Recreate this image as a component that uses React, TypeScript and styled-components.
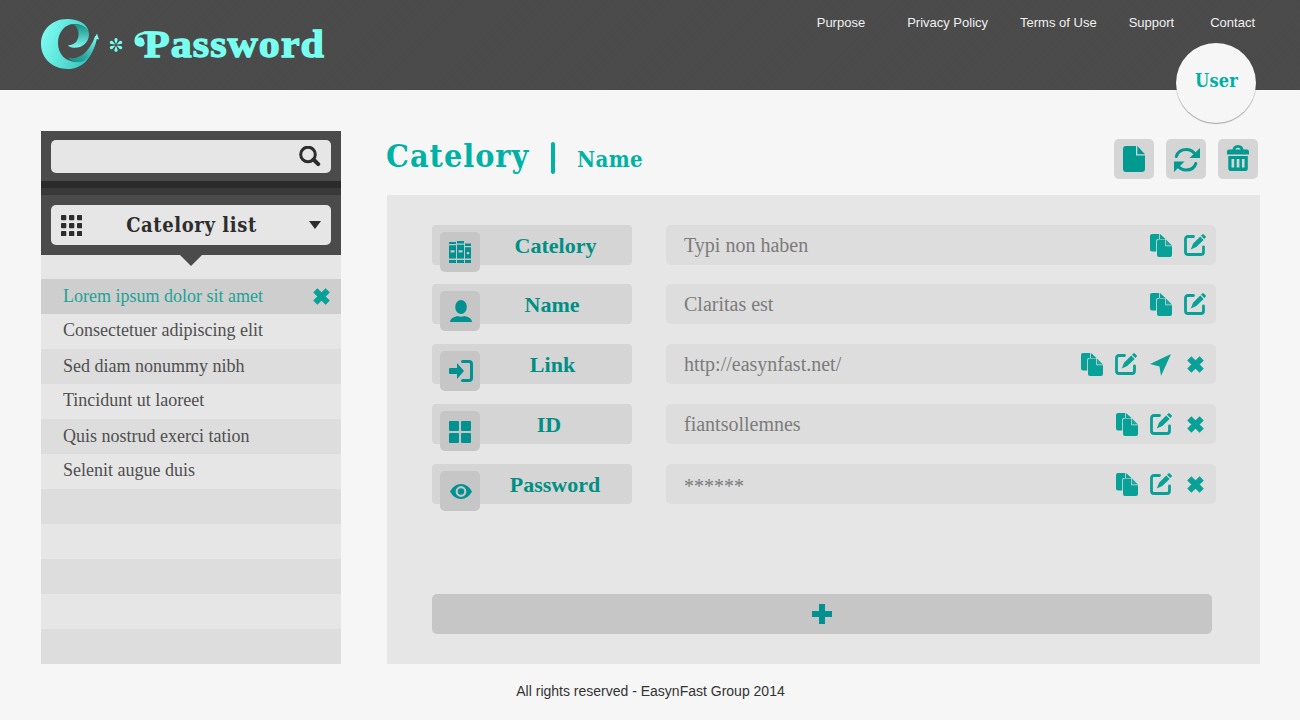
import React from "react";
import styled, { createGlobalStyle } from "styled-components";

const slab = `"DejaVu Serif Condensed", "DejaVu Serif", serif`;
const roman = `"Liberation Serif", "Times New Roman", serif`;
const sans = `"Liberation Sans", Arial, sans-serif`;

const Global = createGlobalStyle`
  * { box-sizing: border-box; }
  body { margin: 0; background: #f6f6f6; }
  svg { display: block; flex: none; }
  button { border: 0; padding: 0; font: inherit; color: inherit; }
`;

const Page = styled.div`
  width: 1300px;
  height: 720px;
  overflow: hidden;
  background: #f6f6f6;
`;

const Header = styled.header`
  height: 90px;
  padding: 15px 45px 0 41px;
  display: flex;
  justify-content: space-between;
  align-items: flex-start;
  background: repeating-linear-gradient(135deg, #4b4b4b 0 3px, #4a4a4a 3px 5px);
`;

const Brand = styled.a`
  display: block;
`;

const Nav = styled.nav`
  display: flex;
  font: 13px/16px ${sans};
  color: #f0f0f0;
`;

const NavLink = styled.a<{ $gap: number }>`
  margin-left: ${(p) => p.$gap}px;
  white-space: nowrap;
`;

const UserBadge = styled.button`
  position: absolute;
  left: 1176px;
  top: 43px;
  width: 80px;
  height: 80px;
  padding: 0 0 4px 1px;
  border-radius: 50%;
  background: #f6f6f6;
  box-shadow: 0 1px 1px rgba(0, 0, 0, 0.35);
  color: #00afa5;
  font: bold 18px/20px ${slab};
  letter-spacing: 0.2px;
`;

const Body = styled.div`
  display: flex;
  padding: 41px 40px 0 41px;
  height: 574px;
`;

const Sidebar = styled.aside`
  width: 300px;
  height: 533px;
  background: #e6e6e6;
`;

const SearchBar = styled.div`
  height: 50px;
  padding: 9px 10px 8px;
  background: #4b4b4b;
`;

const SearchField = styled.div`
  height: 33px;
  border-radius: 5px;
  background: #e6e6e6;
  display: flex;
  justify-content: flex-end;
  padding: 6px 10px 0 0;
`;

const Band = styled.div<{ $tone: string }>`
  height: 7px;
  background: ${(p) => p.$tone};
`;

const Picker = styled.div`
  height: 60px;
  padding: 10px;
  background: #4b4b4b;
`;

const PickerButton = styled.div`
  height: 40px;
  padding: 0 10px;
  border-radius: 5px;
  background: #e6e6e6;
  display: flex;
  align-items: center;
  justify-content: space-between;
  color: #2d2d2d;
  font: bold 20px/40px ${slab};
  letter-spacing: 0.6px;
`;

const PickerText = styled.span`
  margin-right: 8px;
`;

const Notch = styled.div`
  height: 24px;
  display: flex;
  justify-content: center;
`;

const List = styled.ul`
  list-style: none;
  margin: 0;
  padding: 0;
`;

const ListItem = styled.li<{ $active?: boolean; $shade?: boolean }>`
  height: 35px;
  padding: 0 11px 0 22px;
  display: flex;
  align-items: center;
  justify-content: space-between;
  background: ${(p) => (p.$active ? "#cecece" : p.$shade ? "#dddddd" : "#e6e6e6")};
  color: ${(p) => (p.$active ? "#22a296" : "#4f4f4f")};
  font: 18px/21px ${roman};
`;

const ItemText = styled.span<{ $lift: number }>`
  padding-bottom: ${(p) => p.$lift}px;
`;

const Main = styled.main`
  width: 873px;
  margin-left: 46px;
`;

const TitleRow = styled.div`
  height: 64px;
  display: flex;
  justify-content: space-between;
`;

const Titles = styled.div`
  display: flex;
  align-items: flex-start;
  color: #00b1a6;
  font-family: ${slab};
  font-weight: bold;
`;

const Title = styled.h1`
  width: 165px;
  margin: 0 0 0 -1px;
  font-size: 32px;
  line-height: 50px;
  letter-spacing: 1px;
`;

const Divider = styled.span`
  width: 4px;
  height: 32px;
  margin-top: 11px;
  border-radius: 2px;
  background: #00b1a6;
`;

const Subtitle = styled.h2`
  margin: 4px 0 0 22px;
  font-size: 22px;
  line-height: 48px;
  letter-spacing: 0.4px;
`;

const Tools = styled.div`
  display: flex;
  gap: 12px;
  padding: 8px 2px 0 0;
`;

const ToolButton = styled.button`
  width: 40px;
  height: 40px;
  border-radius: 5px;
  background: #d5d5d5;
  color: #009a91;
`;

const Panel = styled.section`
  height: 469px;
  padding: 30px 44px 30px 45px;
  background: #e6e6e6;
  display: flex;
  flex-direction: column;
`;

const Row = styled.div<{ $gap: number }>`
  display: flex;
  gap: 34px;
  margin-bottom: ${(p) => p.$gap}px;
`;

const Label = styled.div<{ $inset: number }>`
  width: 200px;
  height: 40px;
  padding: 0 ${(p) => p.$inset}px 0 8px;
  border-radius: 4px;
  background: #d5d5d5;
  display: flex;
  color: #008f84;
  font: bold 22px/42px ${roman};
`;

const Tile = styled.span`
  width: 40px;
  height: 40px;
  margin-top: 7px;
  border-radius: 5px;
  background: #c6c6c6;
  color: #009190;
`;

const LabelText = styled.span`
  flex: 1;
  text-align: center;
`;

const Field = styled.div`
  width: 550px;
  height: 40px;
  padding: 0 10px 0 18px;
  border-radius: 5px;
  background: #dddddd;
  display: flex;
  justify-content: space-between;
  color: #7b7b7b;
  font: 20px/40px ${roman};
`;

const Value = styled.span<{ $masked: boolean }>`
  padding-top: ${(p) => (p.$masked ? 2 : 0)}px;
`;

const Actions = styled.div`
  display: flex;
  gap: 12px;
  padding-top: 9px;
  color: #08a197;
`;

const AddButton = styled.button`
  width: 780px;
  height: 40px;
  margin-top: auto;
  border-radius: 5px;
  background: #c6c6c6;
  color: #009190;
  display: flex;
  justify-content: center;
  align-items: center;
`;

const Footer = styled.footer`
  padding: 19px 0 0 1px;
  text-align: center;
  color: #333;
  font: 14px/16px ${sans};
`;

const Logo = () => (
  <svg width="290" height="60" viewBox="0 0 290 60">
    <defs>
      <linearGradient id="ring" x1="0" y1="0" x2="1" y2="0.3">
        <stop offset="0" stopColor="#85fff3" />
        <stop offset="0.45" stopColor="#62e9df" />
        <stop offset="1" stopColor="#35c5bc" />
      </linearGradient>
      <linearGradient id="curl" x1="0" y1="0" x2="0" y2="1">
        <stop offset="0" stopColor="#138f87" />
        <stop offset="1" stopColor="#7df8ed" />
      </linearGradient>
      <linearGradient id="tail" x1="0" y1="1" x2="1" y2="0">
        <stop offset="0" stopColor="#148f88" />
        <stop offset="0.4" stopColor="#2aa9a1" />
        <stop offset="1" stopColor="#7df8ed" />
      </linearGradient>
    </defs>
    <g transform="translate(0 4)">
      <path fill="url(#ring)" d="M26 0C11 0 0 11 0 25s11 25 27 25c14 0 24-10 29-31-3 10-10 20-19 24C24 43 17 35 17 24 17 13 24 5 33 5c7 0 12 3 15 8C46 5 38 0 26 0z" />
      <path fill="url(#curl)" d="M31 5.300c10-1 17 4 17 10 0 9-8 14-15 13.500-3-.2-5-1.200-6-2.500 7 0 11-5 10.500-12-.3-4.500-2.500-8-6.500-9z" />
      <path fill="url(#tail)" d="M27 38.500c9 3 17-3.500 21-9.500 3-4.500 5-8.500 6.200-12h2C55 27 50 37 43 42c-6 2.500-12 1-16-3.500z" />
      <path fill="#7df8ed" d="M56 14.500l2 6-2.300-.4-2.700.2z" />
    </g>
    <g fill="#78fff0" transform="translate(75 30)">
      {[0, 60, 120, 180, 240, 300].map((a) => (
        <path key={a} transform={`rotate(${a})`} d="M0-.8L-1.500-4.400a1.700 1.700 0 1 1 3 0z" />
      ))}
    </g>
    <path fill="none" stroke="#78fff0" strokeWidth="2.400" strokeLinecap="round" d="M112 17.800C101 16.500 94.500 20 94.600 26c.2 5 7.200 6 8 2" />
    <circle cx="99" cy="26.500" r="4.200" fill="#78fff0" />
    <text x="103" y="42" fill="#78fff0" stroke="#78fff0" strokeWidth="1.300" fontFamily="Liberation Serif, serif" fontWeight="bold" fontSize="38" textLength="181" lengthAdjust="spacingAndGlyphs" letterSpacing="1">
      Password
    </text>
  </svg>
);

const SearchIcon = () => (
  <svg width="22" height="21" viewBox="0 0 22 21" fill="none" stroke="#2d2d2d">
    <circle cx="9" cy="8.500" r="7.300" strokeWidth="3" />
    <path d="M14.500 13.500l4.700 4.700" strokeWidth="4" strokeLinecap="round" />
  </svg>
);

const DotsIcon = () => (
  <svg width="21" height="21" viewBox="0 0 21 21" fill="#2d2d2d">
    {[0, 8, 16].map((y) => [0, 8, 16].map((x) => <rect key={`${x}-${y}`} x={x} y={y} width="5.300" height="5.300" rx="1" />))}
  </svg>
);

const CrossShape = () => (
  <g stroke="currentColor" strokeWidth="5.900" strokeLinecap="butt">
    <path d="M2.300 2.300l12.400 12.400M14.700 2.300L2.300 14.700" />
  </g>
);

const Cross = () => (
  <svg width="22" height="23" viewBox="-3 -3 22 23"><CrossShape /></svg>
);

const Copy = () => (
  <svg width="22" height="23" viewBox="0 0 22 23" fill="currentColor">
    <path d="M2 0H9.200V4.900H7.800Q6.200 4.900 6.200 6.500V17.500H2Q0 17.500 0 15.500V2Q0 0 2 0z" />
    <path d="M10 0l5.500 4.900H10z" />
    <path d="M8.500 5.600H15.300v6.700H22V21q0 2-2 2H9q-2 0-2-2V7.200q0-1.600 1.500-1.600z" />
    <path d="M16 5.600l6 6h-6z" opacity=".9" />
  </svg>
);

const Edit = () => (
  <svg width="22" height="23" viewBox="0 0 22 23" fill="none">
    <path d="M9.500 2.500H4Q1.500 2.500 1.500 5v13Q1.500 20.500 4 20.500h13q2.500 0 2.500-2.500v-5" stroke="currentColor" strokeWidth="2.800" strokeLinecap="round" />
    <path fill="currentColor" d="M6.800 15.500l2.200-5.700 7.200-7.300 3.400 3.400-7.300 7.200zM17 1.700l1.300-1.300q.7-.6 1.400 0l1.900 1.900q.7.700 0 1.400l-1.300 1.300z" />
  </svg>
);

const Send = () => (
  <svg width="23" height="23" viewBox="0 0 23 23" fill="currentColor">
    <path d="M22 1L12 23l-1.500-9.500L1 11z" />
  </svg>
);

const Books = () => (
  <svg width="40" height="40" viewBox="0 0 40 40" fill="currentColor">
    <path d="M9 10h7v2H9zM17 9h7v2.500h-7zM25 11.500h6V14h-6zM9 28h7v3H9zM17 28h7v3h-7zM25 28h6v3h-6z" />
    <path fillRule="evenodd" d="M9 13.300h7v13.200H9zm1.500 5v2.200h4v-2.200zM17 12.700h7v13.800h-7zm1.500 5.600v2.200h4v-2.200zM25 15.200h6v11.300h-6zm1.800 4.800v2.300h2.400V20z" />
  </svg>
);

const Person = () => (
  <svg width="40" height="40" viewBox="0 0 40 40" fill="currentColor">
    <ellipse cx="21" cy="16" rx="5.800" ry="7" />
    <path d="M10 31q0-4.500 7.500-6 3.500 1.600 7 0 7.500 1.500 7.500 6z" />
  </svg>
);

const Enter = () => (
  <svg width="40" height="40" viewBox="0 0 40 40" fill="currentColor">
    <path d="M10 17h7v-5l7 8-7 8v-5h-7q-1 0-1-1v-4q0-1 1-1z" />
    <path d="M22.500 10.500H29q2.500 0 2.500 2.500v14q0 2.500-2.500 2.500h-6.500" fill="none" stroke="currentColor" strokeWidth="3" strokeLinecap="round" />
  </svg>
);

const Squares = () => (
  <svg width="40" height="40" viewBox="0 0 40 40" fill="currentColor">
    <rect x="9" y="10" width="10" height="10" rx="1" />
    <rect x="21" y="10" width="10" height="10" rx="1" />
    <rect x="9" y="22" width="10" height="10" rx="1" />
    <rect x="21" y="22" width="10" height="10" rx="1" />
  </svg>
);

const Eye = () => (
  <svg width="40" height="40" viewBox="0 0 40 40">
    <path fill="currentColor" d="M10 20.500Q14 13 21 13t11 7.500Q28 28 21 28t-11-7.500z" />
    <circle cx="21" cy="20.500" r="4.300" fill="currentColor" stroke="#c6c6c6" strokeWidth="2.200" />
  </svg>
);

const FileIcon = () => (
  <svg width="40" height="40" viewBox="0 0 40 40" fill="currentColor">
    <path d="M12 7h10v9.500h9V30q0 3-3 3H12q-3 0-3-3V10q0-3 3-3z" />
    <path d="M23.300 7L31 15.200h-7.700z" />
  </svg>
);

const Refresh = () => (
  <svg width="40" height="40" viewBox="0 0 40 40" fill="currentColor">
    <path d="M10.300 17.500Q12.500 10.500 20.500 10.500q5 0 8.500 4.500M29.800 24.500Q28 31 20 31q-5 0-8.500-4.500" fill="none" stroke="currentColor" strokeWidth="3" strokeLinecap="round" />
    <path d="M34 9v10H23.500zM8 33V22.500h10.500z" />
  </svg>
);

const Trash = () => (
  <svg width="40" height="40" viewBox="0 0 40 40" fill="currentColor">
    <path d="M15.800 12q0-4.600 4.200-4.600t4.200 4.600" fill="none" stroke="currentColor" strokeWidth="2.800" />
    <path d="M11 10.500h18q2 0 2 2v3H9v-3q0-2 2-2z" />
    <path fillRule="evenodd" d="M10.300 17h19.500v12.500q0 2.500-2.500 2.500H13q-2.700 0-2.700-2.500zM13.500 20v8.500h2.700V20zm5.200 0v8.500h2.700V20zm5.200 0v8.500h2.700V20z" />
  </svg>
);

const nav: [string, number][] = [
  ["Purpose", 0],
  ["Privacy Policy", 42],
  ["Terms of Use", 32],
  ["Support", 32],
  ["Contact", 36],
];

const items: { text: string; lift: number }[] = [
  { text: "Lorem ipsum dolor sit amet", lift: 0 },
  { text: "Consectetuer adipiscing elit", lift: 2 },
  { text: "Sed diam nonummy nibh", lift: 0 },
  { text: "Tincidunt ut laoreet", lift: 2 },
  { text: "Quis nostrud exerci tation", lift: 0 },
  { text: "Selenit augue duis", lift: 2 },
  ...Array.from({ length: 5 }, () => ({ text: "", lift: 0 })),
];

const rows = [
  { label: "Catelory", inset: 1, icon: Books, value: "Typi non haben", actions: [Copy, Edit], gap: 19 },
  { label: "Name", inset: 8, icon: Person, value: "Claritas est", actions: [Copy, Edit], gap: 20 },
  { label: "Link", inset: 7, icon: Enter, value: "http://easynfast.net/", actions: [Copy, Edit, Send, Cross], gap: 20 },
  { label: "ID", inset: 14, icon: Squares, value: "fiantsollemnes", actions: [Copy, Edit, Cross], gap: 20 },
  { label: "Password", inset: 2, icon: Eye, value: "******", actions: [Copy, Edit, Cross], gap: 0 },
];

export default function App() {
  return (
    <Page>
      <Global />
      <Header>
        <Brand><Logo /></Brand>
        <Nav>
          {nav.map(([text, gap]) => <NavLink key={text} $gap={gap}>{text}</NavLink>)}
        </Nav>
      </Header>
      <UserBadge>User</UserBadge>
      <Body>
        <Sidebar>
          <SearchBar><SearchField><SearchIcon /></SearchField></SearchBar>
          <Band $tone="#2b2b2b" />
          <Band $tone="#393939" />
          <Picker>
            <PickerButton>
              <DotsIcon />
              <PickerText>Catelory list</PickerText>
              <svg width="12" height="8" viewBox="0 0 12 8"><path d="M0 0h12L6 8z" fill="#2d2d2d" /></svg>
            </PickerButton>
          </Picker>
          <Notch>
            <svg width="22" height="11" viewBox="0 0 22 11"><path d="M0 0h22L11 11z" fill="#4b4b4b" /></svg>
          </Notch>
          <List>
            {items.map(({ text, lift }, i) => (
              <ListItem key={i} $active={i === 0} $shade={i % 2 === 0}>
                <ItemText $lift={lift}>{text}</ItemText>
                {i === 0 && (
                  <svg width="17" height="17" viewBox="0 0 17 17" color="#08a197"><CrossShape /></svg>
                )}
              </ListItem>
            ))}
          </List>
        </Sidebar>
        <Main>
          <TitleRow>
            <Titles>
              <Title>Catelory</Title>
              <Divider />
              <Subtitle>Name</Subtitle>
            </Titles>
            <Tools>
              <ToolButton><FileIcon /></ToolButton>
              <ToolButton><Refresh /></ToolButton>
              <ToolButton><Trash /></ToolButton>
            </Tools>
          </TitleRow>
          <Panel>
            {rows.map(({ label, inset, icon: Icon, value, actions, gap }) => (
              <Row key={label} $gap={gap}>
                <Label $inset={inset}>
                  <Tile><Icon /></Tile>
                  <LabelText>{label}</LabelText>
                </Label>
                <Field>
                  <Value $masked={value.startsWith("*")}>{value}</Value>
                  <Actions>{actions.map((Action, i) => <Action key={i} />)}</Actions>
                </Field>
              </Row>
            ))}
            <AddButton>
              <svg width="20" height="20" viewBox="0 0 20 20"><path d="M7 0h6v7h7v6h-7v7H7v-7H0V7h7z" fill="currentColor" /></svg>
            </AddButton>
          </Panel>
        </Main>
      </Body>
      <Footer>All rights reserved - EasynFast Group 2014</Footer>
    </Page>
  );
}
